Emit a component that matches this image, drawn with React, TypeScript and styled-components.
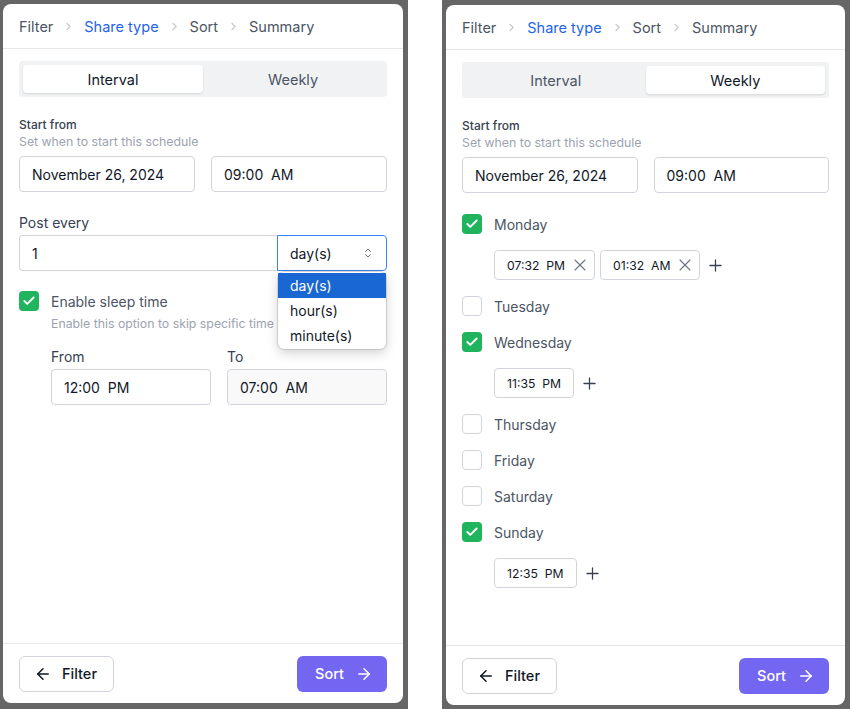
import React from 'react';
import styled, { createGlobalStyle } from 'styled-components';
import { ArrowLeft, ArrowRight, Check, ChevronRight, ChevronsUpDown, Plus, X } from 'lucide-react';

const GlobalStyle = createGlobalStyle`
  html, body {
    margin: 0;
    padding: 0;
    background: #ffffff;
  }
  body {
    font-family: Inter, "Noto Sans", sans-serif;
    color: #111827;
  }
`;

interface IFrameProps {
  pad: string;
}

const Page = styled.div`
  display: flex;
  width: 850px;
  height: 709px;
  background: #ffffff;
`;

const Frame = styled.div<IFrameProps>`
  width: 408px;
  height: 709px;
  box-sizing: border-box;
  padding: ${({ pad }) => pad};
  background: #666666;
  display: flex;
`;

const Gap = styled.div`
  width: 34px;
`;

const Panel = styled.div`
  flex: 1;
  background: #ffffff;
  border-radius: 8px;
  display: flex;
  flex-direction: column;
  overflow: hidden;
`;

const Header = styled.div`
  height: 44px;
  flex-shrink: 0;
  display: flex;
  align-items: center;
  gap: 9px;
  padding: 0 16px;
  border-bottom: 1px solid #e5e7eb;
`;

const Crumb = styled.span<{ active?: boolean }>`
  font-size: 14.5px;
  color: ${({ active }) => (active ? '#2563eb' : '#4b5563')};
`;

const CrumbSep = styled(ChevronRight)`
  color: #c4c8cf;
`;

const Body = styled.div`
  flex: 1;
  padding: 12px 16px;
  display: flex;
  flex-direction: column;
`;

const Tabs = styled.div`
  display: grid;
  grid-template-columns: 1fr 1fr;
  height: 36px;
  box-sizing: border-box;
  padding: 4px;
  background: #f1f2f4;
  border-radius: 4px;
`;

const Tab = styled.div<{ active?: boolean }>`
  display: flex;
  align-items: center;
  justify-content: center;
  font-size: 14.5px;
  border-radius: 4px;
  color: ${({ active }) => (active ? '#111827' : '#4b5563')};
  background: ${({ active }) => (active ? '#ffffff' : 'transparent')};
  box-shadow: ${({ active }) => (active ? '0 1px 2px rgba(0,0,0,0.12)' : 'none')};
`;

const Section = styled.div<{ top: number }>`
  margin-top: ${({ top }) => top}px;
  display: flex;
  flex-direction: column;
`;

const SmallLabel = styled.div`
  font-size: 12px;
  line-height: 16px;
  font-weight: 500;
  color: #374151;
`;

const Hint = styled.div`
  font-size: 12.3px;
  line-height: 18px;
  color: #9ca3af;
  white-space: nowrap;
  overflow: hidden;
`;

const SleepHint = styled(Hint)`
  margin-top: 4px;
  width: 228px;
`;

const Label = styled.div`
  font-size: 14px;
  line-height: 20px;
  color: #374151;
`;

const Row = styled.div<{ top?: number; gap?: number }>`
  display: flex;
  gap: ${({ gap }) => gap ?? 16}px;
  margin-top: ${({ top }) => top ?? 0}px;
`;

const Field = styled.div<{ focused?: boolean; shaded?: boolean }>`
  flex: 1;
  min-width: 0;
  height: 36px;
  box-sizing: border-box;
  display: flex;
  align-items: center;
  justify-content: space-between;
  padding: 0 12px;
  font-size: 14px;
  color: #111827;
  white-space: pre;
  background: ${({ shaded }) => (shaded ? '#f9f9fa' : '#ffffff')};
  border: 1px solid ${({ focused }) => (focused ? '#3b82f6' : '#d1d5db')};
  border-radius: 4px;
`;

const NumberField = styled(Field)`
  border-radius: 4px 0 0 4px;
  border-right: none;
`;

const SelectWrap = styled.div`
  position: relative;
  width: 110px;
  display: flex;
`;

const SelectField = styled(Field)`
  border-radius: 0 4px 4px 0;
`;

const Menu = styled.div`
  position: absolute;
  top: 37px;
  left: 1px;
  width: 108px;
  padding: 1px 0;
  background: #ffffff;
  border-radius: 6px;
  box-shadow: 0 0 0 1px rgba(0, 0, 0, 0.12), 0 4px 12px rgba(0, 0, 0, 0.18);
  z-index: 2;
`;

const MenuItem = styled.div<{ selected?: boolean }>`
  height: 25px;
  display: flex;
  align-items: center;
  padding: 0 12px;
  font-size: 14px;
  color: ${({ selected }) => (selected ? '#ffffff' : '#111827')};
  background: ${({ selected }) => (selected ? '#1967d2' : 'transparent')};
`;

const CheckRow = styled.div`
  display: flex;
  align-items: center;
  gap: 12px;
`;

const Box = styled.div<{ checked?: boolean }>`
  width: 20px;
  height: 20px;
  box-sizing: border-box;
  border-radius: 4px;
  flex-shrink: 0;
  display: flex;
  align-items: center;
  justify-content: center;
  background: ${({ checked }) => (checked ? '#21b45f' : '#ffffff')};
  border: ${({ checked }) => (checked ? 'none' : '1px solid #d1d5db')};
`;

const CheckText = styled.span`
  font-size: 14px;
  color: #4b5563;
`;

const Indent = styled.div`
  padding-left: 32px;
  display: flex;
  flex-direction: column;
`;

const Column = styled.div`
  flex: 1;
  display: flex;
  flex-direction: column;
  gap: 2px;

  & > ${Field} {
    flex: none;
  }
`;

const DayList = styled.div`
  margin-top: 21px;
  display: flex;
  flex-direction: column;
  gap: 16px;
`;

const Chips = styled.div`
  display: flex;
  align-items: center;
  gap: 5px;
  padding-left: 32px;
`;

const Chip = styled.div<{ removable?: boolean }>`
  height: 30px;
  box-sizing: border-box;
  display: flex;
  align-items: center;
  gap: 5px;
  padding: ${({ removable }) => (removable ? '0 4px 0 12px' : '0 12px')};
  border: 1px solid #d1d5db;
  border-radius: 4px;
  font-size: 12.2px;
  color: #111827;
  white-space: pre;
`;

const AddButton = styled.div`
  display: flex;
  align-items: center;
  margin-left: 1px;
  color: #374151;
`;

const Footer = styled.div`
  height: 60px;
  flex-shrink: 0;
  box-sizing: border-box;
  display: flex;
  align-items: center;
  justify-content: space-between;
  padding: 0 16px;
  border-top: 1px solid #e5e7eb;
`;

const Button = styled.div<{ primary?: boolean }>`
  height: 36px;
  box-sizing: border-box;
  display: flex;
  align-items: center;
  gap: ${({ primary }) => (primary ? '11px' : '10px')};
  border-radius: 6px;
  font-size: 14.5px;
  font-weight: 500;
  color: ${({ primary }) => (primary ? '#ffffff' : '#111827')};
  background: ${({ primary }) => (primary ? '#7366f0' : '#ffffff')};
  border: ${({ primary }) => (primary ? 'none' : '1px solid #d1d5db')};
  padding: ${({ primary }) => (primary ? '0 14px 0 18px' : '0 16px 0 14px')};
`;

const Breadcrumb = () => (
  <Header>
    <Crumb>Filter</Crumb>
    <CrumbSep size={13} />
    <Crumb active>Share type</Crumb>
    <CrumbSep size={13} />
    <Crumb>Sort</Crumb>
    <CrumbSep size={13} />
    <Crumb>Summary</Crumb>
  </Header>
);

const StartFrom = () => (
  <Section top={20}>
    <SmallLabel>Start from</SmallLabel>
    <Hint>Set when to start this schedule</Hint>
    <Row top={5}>
      <Field>November 26, 2024</Field>
      <Field>{'09:00  AM'}</Field>
    </Row>
  </Section>
);

const Checkbox = ({ checked }: { checked?: boolean }) => (
  <Box checked={checked}>{checked && <Check size={14} strokeWidth={3.2} color="#ffffff" />}</Box>
);

const PanelFooter = () => (
  <Footer>
    <Button>
      <ArrowLeft size={18} strokeWidth={2} />
      Filter
    </Button>
    <Button primary>
      Sort
      <ArrowRight size={18} strokeWidth={2} />
    </Button>
  </Footer>
);

const IntervalPanel = () => (
  <Panel>
    <Breadcrumb />
    <Body>
      <Tabs>
        <Tab active>Interval</Tab>
        <Tab>Weekly</Tab>
      </Tabs>
      <StartFrom />
      <Section top={21}>
        <Label>Post every</Label>
        <Row top={2} gap={0}>
          <NumberField>1</NumberField>
          <SelectWrap>
            <SelectField focused>
              day(s)
              <ChevronsUpDown size={12} color="#6b7280" />
            </SelectField>
            <Menu>
              <MenuItem selected>day(s)</MenuItem>
              <MenuItem>hour(s)</MenuItem>
              <MenuItem>minute(s)</MenuItem>
            </Menu>
          </SelectWrap>
        </Row>
      </Section>
      <Section top={20}>
        <CheckRow>
          <Checkbox checked />
          <CheckText>Enable sleep time</CheckText>
        </CheckRow>
        <Indent>
          <SleepHint>Enable this option to skip specific time ranges</SleepHint>
          <Row top={14}>
            <Column>
              <Label>From</Label>
              <Field>{'12:00  PM'}</Field>
            </Column>
            <Column>
              <Label>To</Label>
              <Field shaded>{'07:00  AM'}</Field>
            </Column>
          </Row>
        </Indent>
      </Section>
    </Body>
    <PanelFooter />
  </Panel>
);

interface IDay {
  name: string;
  checked: boolean;
  times: { label: string; removable: boolean }[];
}

const days: IDay[] = [
  { name: 'Monday', checked: true, times: [{ label: '07:32  PM', removable: true }, { label: '01:32  AM', removable: true }] },
  { name: 'Tuesday', checked: false, times: [] },
  { name: 'Wednesday', checked: true, times: [{ label: '11:35  PM', removable: false }] },
  { name: 'Thursday', checked: false, times: [] },
  { name: 'Friday', checked: false, times: [] },
  { name: 'Saturday', checked: false, times: [] },
  { name: 'Sunday', checked: true, times: [{ label: '12:35  PM', removable: false }] },
];

const WeeklyPanel = () => (
  <Panel>
    <Breadcrumb />
    <Body>
      <Tabs>
        <Tab>Interval</Tab>
        <Tab active>Weekly</Tab>
      </Tabs>
      <StartFrom />
      <DayList>
        {days.map((day) => (
          <React.Fragment key={day.name}>
            <CheckRow>
              <Checkbox checked={day.checked} />
              <CheckText>{day.name}</CheckText>
            </CheckRow>
            {day.times.length > 0 && (
              <Chips>
                {day.times.map((t) => (
                  <Chip key={t.label} removable={t.removable}>
                    {t.label}
                    {t.removable && <X size={20} color="#6b7280" strokeWidth={1.3} />}
                  </Chip>
                ))}
                <AddButton>
                  <Plus size={19} strokeWidth={1.6} />
                </AddButton>
              </Chips>
            )}
          </React.Fragment>
        ))}
      </DayList>
    </Body>
    <PanelFooter />
  </Panel>
);

const App = () => (
  <>
    <GlobalStyle />
    <Page>
      <Frame pad="4px 5px 6px 3px">
        <IntervalPanel />
      </Frame>
      <Gap />
      <Frame pad="5px 5px 4px 4px">
        <WeeklyPanel />
      </Frame>
    </Page>
  </>
);

export default App;
